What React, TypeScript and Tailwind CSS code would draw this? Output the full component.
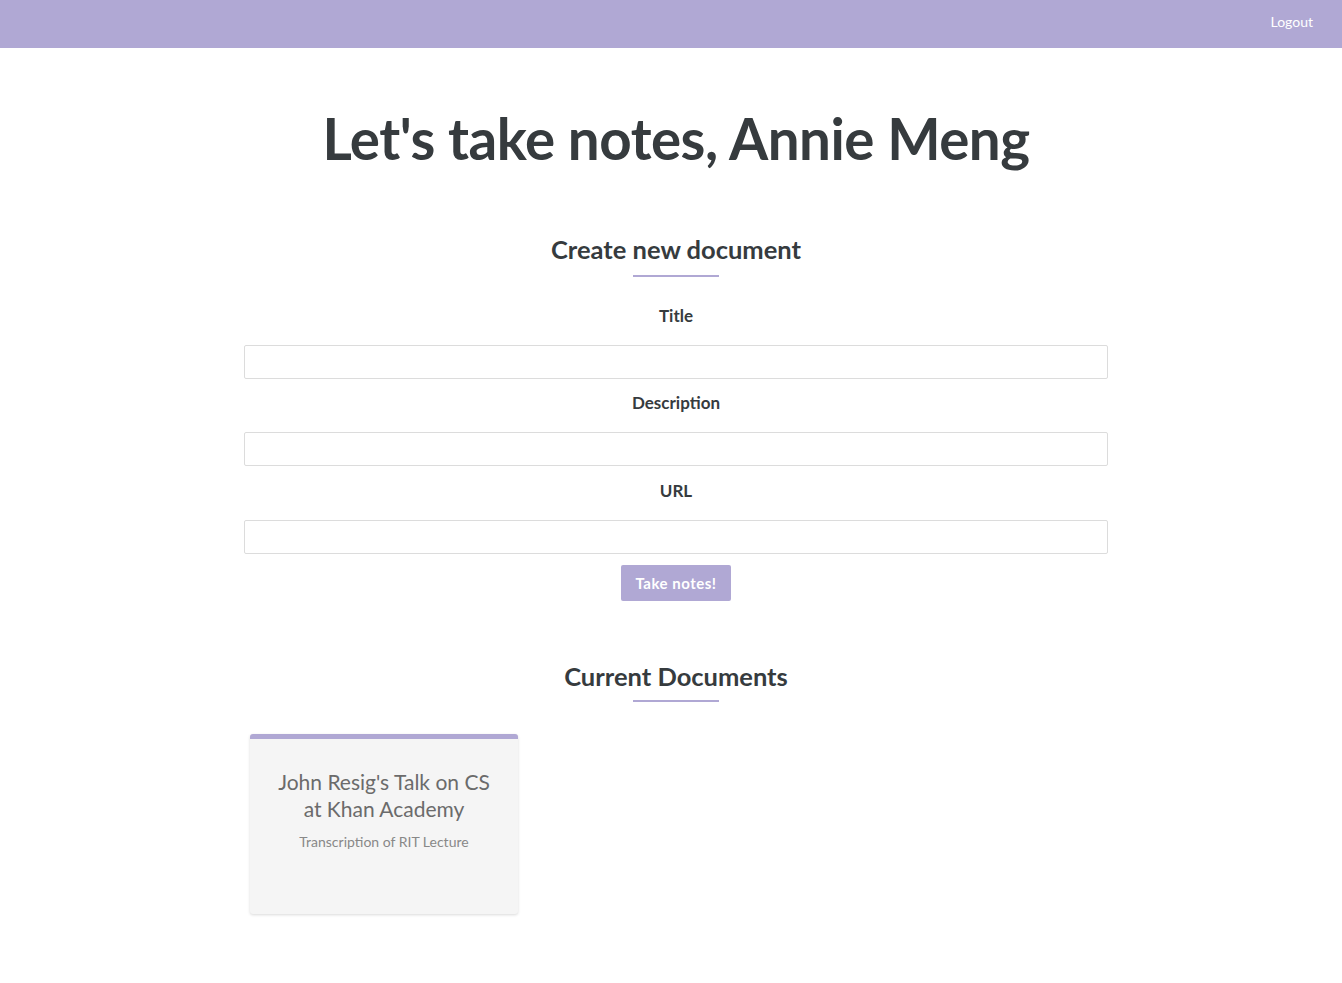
import React from "react";

export default function App() {
  return (
    <div className="min-h-screen bg-white text-[#363b3e]" style={{ fontFamily: "Lato, 'Noto Sans', sans-serif" }}>
      <header className="h-12 bg-[#b0a8d4] flex items-center justify-end pr-[29px] pb-[5px]">
        <span className="text-white text-[14px]">Logout</span>
      </header>
      <main className="flex justify-center pl-[10px]">
        <div className="w-[864px] flex flex-col items-center">
          <h1 className="mt-[56px] text-[56.5px] leading-[68px] font-bold tracking-[-0.5px]">Let's take notes, Annie Meng</h1>
          <h2 className="mt-[61px] text-[25.5px] leading-[32px] font-bold">Create new document</h2>
          <div className="mt-[10px] w-[86px] h-[2px] bg-[#b0a8d4]" />
          <label className="mt-[28px] text-[17px] leading-[22px] font-bold">Title</label>
          <input className="mt-[18px] w-full h-[34px] border border-[#dcdcdc] rounded-[2px] outline-none" />
          <label className="mt-[13px] text-[17px] leading-[22px] font-bold">Description</label>
          <input className="mt-[18px] w-full h-[34px] border border-[#dcdcdc] rounded-[2px] outline-none" />
          <label className="mt-[14px] text-[17px] leading-[22px] font-bold">URL</label>
          <input className="mt-[18px] w-full h-[34px] border border-[#dcdcdc] rounded-[2px] outline-none" />
          <button className="mt-[11px] w-[110px] h-[36px] bg-[#b0a8d4] rounded-[2px] text-white text-[15px] font-bold tracking-[0.5px]">Take notes!</button>
          <h2 className="mt-[59px] text-[25.5px] leading-[32px] font-bold">Current Documents</h2>
          <div className="mt-[8px] w-[86px] h-[2px] bg-[#b0a8d4]" />
          <div className="mt-[32px] w-full">
            <div className="ml-[6px] w-[268px] h-[180px] bg-[#f5f5f5] border-t-[5px] border-[#b0a8d4] rounded-[3px] shadow-[0_1px_3px_rgba(0,0,0,0.15)] flex flex-col items-center px-[24px] pt-[29px]">
              <div className="text-[21px] leading-[27px] text-[#6b6b6b] text-center">John Resig's Talk on CS at Khan Academy</div>
              <div className="mt-[11px] text-[14px] leading-[18px] text-[#888888] text-center">Transcription of RIT Lecture</div>
            </div>
          </div>
        </div>
      </main>
    </div>
  );
}
